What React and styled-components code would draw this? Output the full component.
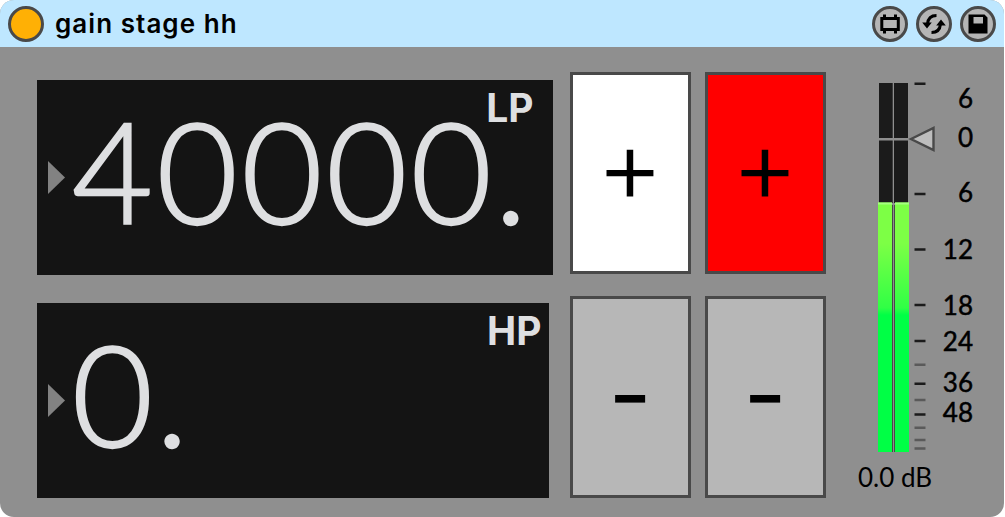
import React from "react";
import styled, { createGlobalStyle } from "styled-components";

const GlobalStyle = createGlobalStyle`
  * {
    box-sizing: border-box;
  }
  body {
    margin: 0;
    background: #ffffff;
  }
`;

const colors = {
  header: "#bee7ff",
  body: "#8f8f8f",
  lcd: "#141414",
  lcdText: "#dedfe1",
  outline: "#494949",
  button: "#b7b7b7",
  green: "#00ff45",
  lime: "#7dff45"
};

const Device = styled.div`
  width: 1004px;
  height: 517px;
  border-radius: 14px;
  overflow: hidden;
  background: ${colors.body};
  font-family: Lato, "Liberation Sans", sans-serif;
  color: #000000;
`;

const Header = styled.header`
  display: flex;
  align-items: center;
  height: 47px;
  padding: 0 8px;
  background: ${colors.header};
`;

const PowerButton = styled.span`
  width: 36px;
  height: 36px;
  border: 3px solid ${colors.outline};
  border-radius: 50%;
  background: #ffb005;
`;

const Title = styled.h1`
  margin: 0 auto 0 11px;
  font: 600 26px Inter, sans-serif;
  line-height: 47px;
  letter-spacing: 1.05px;
`;

const Tools = styled.div`
  display: flex;
  gap: 8px;
`;

const ToolButton = styled.span`
  width: 36px;
  height: 36px;
  border: 3px solid ${colors.outline};
  border-radius: 50%;
  background: #b5b5b5;
  svg {
    display: block;
    width: 30px;
    height: 30px;
  }
`;

const Body = styled.main`
  display: flex;
  height: 470px;
  padding-left: 36.5px;
`;

const Displays = styled.section`
  flex: none;
  width: 533px;
  padding-top: 32.5px;
`;

const Display = styled.div`
  position: relative;
  display: flex;
  align-items: center;
  width: ${props => props.$width}px;
  height: 195.5px;
  margin-bottom: 27.5px;
  padding-left: 11px;
  background: ${colors.lcd};
  color: ${colors.lcdText};
`;

const Pointer = styled.svg`
  width: 17px;
  height: 33px;
  fill: #828282;
`;

const Value = styled.span`
  margin-top: -13px;
  margin-left: 7.5px;
  font-size: 139.5px;
  font-weight: 300;
  line-height: 195px;
  letter-spacing: 3.8px;
  -webkit-text-stroke: 2.4px ${colors.lcdText};
`;

const Point = styled.span`
  margin-left: -1px;
`;

const FilterLabel = styled.span`
  position: absolute;
  top: 8px;
  right: ${props => props.$right}px;
  font: 700 39px/40px Inter, sans-serif;
`;

const Buttons = styled.section`
  display: grid;
  flex: none;
  grid-template-columns: 121px 121px;
  grid-template-rows: 202px 202px;
  gap: 22px 14px;
  padding-top: 25px;
`;

const StepButton = styled.button`
  display: flex;
  align-items: center;
  justify-content: center;
  padding: 0 0 ${props => (props.$minus ? 6 : 17)}px;
  border: 3px solid ${colors.outline};
  background: ${props => props.$fill || colors.button};
  color: #000000;
  font: ${props => (props.$minus ? "400 94px" : "300 104px")} / 100px Inter, sans-serif;
`;

const MeterPanel = styled.section`
  width: 125px;
  margin-left: 52.5px;
  padding-top: 35.5px;
`;

const MeterRow = styled.div`
  display: flex;
`;

const MeterGraphic = styled.svg`
  display: block;
  flex: none;
  width: 60px;
  height: 370px;
`;

const Scale = styled.div`
  display: grid;
  width: 35px;
  grid-template-rows: 39px 55px 57.5px 55.5px 36px 41.5px 30px 28px;
  margin-top: -0.6px;
  font-size: 26px;
  line-height: 32px;
  text-align: right;
  -webkit-text-stroke: 0.5px #000000;
`;

const Level = styled.div`
  margin-top: 8px;
  margin-left: -20px;
  font-size: 26px;
  line-height: 32px;
`;

const steps = [
  { sign: "+", fill: "#ffffff" },
  { sign: "+", fill: "#ff0000" },
  { sign: "-" },
  { sign: "-" }
];
const marks = ["6", "0", "6", "12", "18", "24", "36", "48"];
const majorTicks = [0.7, 111, 166.5, 222, 258, 300.7, 331.5];
const minorTicks = [281.7, 317, 344.7, 357, 365.5];

function FilterDisplay({ label, value, width, right }) {
  return (
    <Display $width={width}>
      <Pointer viewBox="0 0 17 33">
        <path d="M0 0 17 16.5 0 33Z" />
      </Pointer>
      <Value>
        {value}
        <Point>.</Point>
      </Value>
      <FilterLabel $right={right}>{label}</FilterLabel>
    </Display>
  );
}

function Meter() {
  return (
    <MeterGraphic viewBox="0 0 60 370" overflow="visible">
      <defs>
        <linearGradient id="level" gradientUnits="userSpaceOnUse" x1="0" y1="160" x2="0" y2="232">
          <stop offset="0" stopColor={colors.lime} />
          <stop offset="0.9" stopColor="#30ff45" />
          <stop offset="1" stopColor={colors.green} />
        </linearGradient>
      </defs>
      <path fill="#1b1b1b" d="M1 0h13.7v120H1zM16 0h14v120H16z" />
      <path fill={colors.body} d="M1 55h29v2.5H1z" />
      <path fill={colors.outline} d="M14 122h1v247h-1zM16 122h1v247h-1z" />
      <path fill="url(#level)" d="M0 119.5h14V369H0zM17 119.5h14V369H17z" />
      <path fill="#a6ff80" d="M0 119.5h14v2H0zM17 119.5h14v2H17z" />
      <path stroke="#1b1b1b" strokeWidth="2.6" d={majorTicks.map(y => `M36.5 ${y}h11`).join("")} />
      <path stroke="#5a5a5a" strokeWidth="2.6" d={minorTicks.map(y => `M36.5 ${y}h11`).join("")} />
      <path fill="#bdbdbd" stroke={colors.outline} strokeWidth="2.4" d="M33 56 55.5 45v22z" />
    </MeterGraphic>
  );
}

export default function App() {
  return (
    <Device>
      <GlobalStyle />
      <Header>
        <PowerButton />
        <Title>gain stage hh</Title>
        <Tools>
          <ToolButton>
            <svg viewBox="0 0 30 30" fill="none" stroke="#000" strokeWidth="3">
              <path d="M6.8 9.5h16.5v11H6.8zM9.5 5.5v4M20.5 5.5v4M9.5 20.5v4M20.5 20.5v4" />
            </svg>
          </ToolButton>
          <ToolButton>
            <svg viewBox="0 0 30 30" fill="none" stroke="#000" strokeWidth="3">
              <path d="M17.5 6.5c-5 0-8.5 3-9 8.5M12.500 23.500c5 0 8.500-3 9-8.500" />
              <path fill="#000" stroke="none" d="M3.2 13.5h9.6L8 19.5zM17.2 16.5h9.6L22 10.5z" />
            </svg>
          </ToolButton>
          <ToolButton>
            <svg viewBox="0 0 30 30">
              <path fillRule="evenodd" d="M5.5 5.5h16l3 3v16h-19zM10.5 8v6.500h9.500V8z" />
            </svg>
          </ToolButton>
        </Tools>
      </Header>
      <Body>
        <Displays>
          <FilterDisplay label="LP" value="40000" width={516.5} right={19.5} />
          <FilterDisplay label="HP" value="0" width={512} right={7} />
        </Displays>
        <Buttons>
          {steps.map((step, i) => (
            <StepButton key={i} $fill={step.fill} $minus={step.sign === "-"}>
              {step.sign}
            </StepButton>
          ))}
        </Buttons>
        <MeterPanel>
          <MeterRow>
            <Meter />
            <Scale>
              {marks.map((mark, i) => (
                <span key={i}>{mark}</span>
              ))}
            </Scale>
          </MeterRow>
          <Level>0.0 dB</Level>
        </MeterPanel>
      </Body>
    </Device>
  );
}
